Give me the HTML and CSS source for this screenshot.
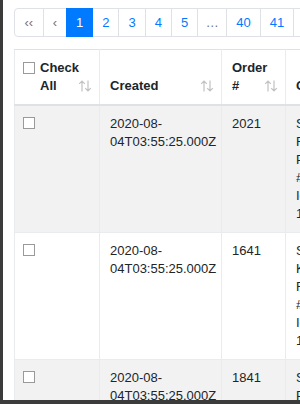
FILE: index.html
```html
<!DOCTYPE html>
<html lang="en">
<head>
    <meta charset="UTF-8">
    <meta name="viewport" content="width=device-width, initial-scale=1.0">
    <title>Orders</title>
    <link rel="stylesheet" href="styles.css">
</head>
<body>
    <div class="window">
        <ul class="pagination">
            <li class="page-item disabled wide"><span>&lsaquo;&lsaquo;</span></li>
            <li class="page-item disabled"><span>&lsaquo;</span></li>
            <li class="page-item active"><span>1</span></li>
            <li class="page-item"><span>2</span></li>
            <li class="page-item"><span>3</span></li>
            <li class="page-item"><span>4</span></li>
            <li class="page-item"><span>5</span></li>
            <li class="page-item disabled narrow"><span>&hellip;</span></li>
            <li class="page-item"><span>40</span></li>
            <li class="page-item"><span>41</span></li>
            <li class="page-item"><span>&rsaquo;</span></li>
            <li class="page-item"><span>&rsaquo;&rsaquo;</span></li>
        </ul>

        <table class="orders">
            <thead>
                <tr>
                    <th class="col-check"><div class="check-all"><span class="box"></span><span>Check All</span></div><svg class="sort" width="14" height="12" viewBox="0 0 14 12"><path d="M4 11.5V1M1.2 3.8L4 1l2.8 2.8M10 0.5V11M7.2 8.2L10 11l2.8-2.8" fill="none" stroke="#c2c2c2" stroke-width="1.2"/></svg></th>
                    <th class="col-created">Created<svg class="sort" width="14" height="12" viewBox="0 0 14 12"><path d="M4 11.5V1M1.2 3.8L4 1l2.8 2.8M10 0.5V11M7.2 8.2L10 11l2.8-2.8" fill="none" stroke="#c2c2c2" stroke-width="1.2"/></svg></th>
                    <th class="col-order">Order #<svg class="sort" width="14" height="12" viewBox="0 0 14 12"><path d="M4 11.5V1M1.2 3.8L4 1l2.8 2.8M10 0.5V11M7.2 8.2L10 11l2.8-2.8" fill="none" stroke="#c2c2c2" stroke-width="1.2"/></svg></th>
                    <th class="col-ship">Customer<svg class="sort" width="14" height="12" viewBox="0 0 14 12"><path d="M4 11.5V1M1.2 3.8L4 1l2.8 2.8M10 0.5V11M7.2 8.2L10 11l2.8-2.8" fill="none" stroke="#c2c2c2" stroke-width="1.2"/></svg></th>
                </tr>
            </thead>
            <tbody>
                <tr>
                    <td><span class="box"></span></td>
                    <td>2020-08-04T03:55:25.000Z</td>
                    <td>2021</td>
                    <td>Sam Smith<br>Faraday Road<br>Paris<br>#12<br>Idaho<br>10101</td>
                </tr>
                <tr>
                    <td><span class="box"></span></td>
                    <td>2020-08-04T03:55:25.000Z</td>
                    <td>1641</td>
                    <td>Sara Jones<br>Kent Street<br>Frome<br>#4<br>Iowa<br>12345</td>
                </tr>
                <tr>
                    <td><span class="box"></span></td>
                    <td>2020-08-04T03:55:25.000Z</td>
                    <td>1841</td>
                    <td>Steve Hill<br>Park Lane<br>Rome<br>#9<br>Ohio<br>14141</td>
                </tr>
            </tbody>
        </table>
    </div>
</body>
</html>
```

FILE: styles.css
```css
html, body {
    margin: 0;
    padding: 0;
}
body {
    font-family: "Liberation Sans", Arial, sans-serif;
    font-size: 13px;
    line-height: 18px;
    color: #212529;
    background-color: #fff;
}
.window {
    box-sizing: border-box;
    width: 300px;
    height: 404px;
    overflow: hidden;
    border-left: 3px solid #3b3b3b;
    border-bottom: 4px solid #3b3b3b;
    padding: 8px 0 0 11px;
}
.pagination {
    display: flex;
    list-style: none;
    margin: 0 0 12px 0;
    padding: 0;
}
.page-item span {
    display: block;
    height: 27px;
    line-height: 27px;
    padding: 0 9px;
    border: 1px solid #dee2e6;
    margin-left: -1px;
    color: #007bff;
    background-color: #fff;
    white-space: nowrap;
}
.page-item:first-child span {
    margin-left: 0;
    border-radius: 4px 0 0 4px;
}
.page-item.wide span {
    padding: 0 9.5px;
}
.page-item.narrow span {
    padding: 0 7.5px;
}
.page-item.disabled span {
    color: #6c757d;
}
.page-item.active span {
    position: relative;
    color: #fff;
    background-color: #007bff;
    border-color: #007bff;
}
.orders {
    border-collapse: collapse;
    table-layout: fixed;
    width: 400px;
}
.orders th,
.orders td {
    padding: 9px 10px;
    border: 1px solid #e9ecef;
    border-top: 1px solid #dee2e6;
    text-align: left;
    vertical-align: top;
}
.orders th {
    position: relative;
    vertical-align: bottom;
    font-weight: bold;
    border-bottom: 2px solid #dee2e6;
    padding-right: 24px;
}
.orders th.col-check {
    padding-right: 10px;
}
.orders tbody tr:nth-child(odd) {
    background-color: #f2f2f2;
}
.col-check { width: 64px; }
.col-created { width: 87px; }
.col-order { width: 29px; }
.col-ship { width: 100px; }
.check-all {
    display: flex;
    align-items: flex-start;
    padding-right: 14px;
}
.check-all .box {
    flex: none;
    margin-top: 3px;
}
.box {
    display: inline-block;
    box-sizing: border-box;
    width: 12px;
    height: 12px;
    border: 1px solid #9a9a9a;
    background-color: #fff;
    vertical-align: -1px;
    margin: 0 5px 0 -2px;
}
.sort {
    position: absolute;
    right: 7px;
    bottom: 12px;
}
```
